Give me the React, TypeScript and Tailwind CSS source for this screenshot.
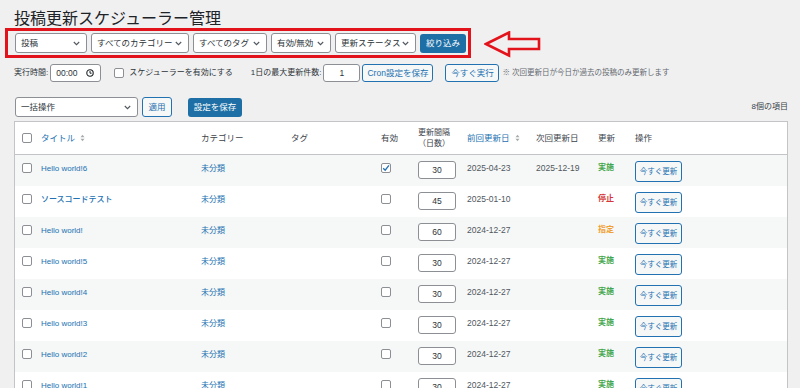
import { ReactNode } from "react";

type Row = {
  title: string;
  enabled: boolean;
  interval: number;
  last: string;
  next: string;
  status: "実施" | "停止" | "指定";
};

const rows: Row[] = [
  { title: "Hello world!6", enabled: true, interval: 30, last: "2025-04-23", next: "2025-12-19", status: "実施" },
  { title: "ソースコードテスト", enabled: false, interval: 45, last: "2025-01-10", next: "", status: "停止" },
  { title: "Hello world!", enabled: false, interval: 60, last: "2024-12-27", next: "", status: "指定" },
  { title: "Hello world!5", enabled: false, interval: 30, last: "2024-12-27", next: "", status: "実施" },
  { title: "Hello world!4", enabled: false, interval: 30, last: "2024-12-27", next: "", status: "実施" },
  { title: "Hello world!3", enabled: false, interval: 30, last: "2024-12-27", next: "", status: "実施" },
  { title: "Hello world!2", enabled: false, interval: 30, last: "2024-12-27", next: "", status: "実施" },
  { title: "Hello world!1", enabled: false, interval: 30, last: "2024-12-27", next: "", status: "実施" },
];

const statusColor = {
  実施: "text-[#3fa64a]",
  停止: "text-[#d63638]",
  指定: "text-[#f0a030]",
};

const cols =
  "grid grid-cols-[19px_160px_90px_90px_37px_49px_69px_62px_37px_1fr]";

function Chevron() {
  return (
    <svg width="7" height="5" viewBox="0 0 7 5" className="shrink-0">
      <path d="M0.8 1 L3.5 3.7 L6.2 1" fill="none" stroke="#50575e" strokeWidth="1.1" />
    </svg>
  );
}

function Select({ label, width }: { label: string; width: string }) {
  return (
    <div
      className={`${width} h-[20px] flex items-center justify-between bg-white border border-[#8c8f94] rounded-[3px] pl-[5px] pr-[6px] text-[8.5px] text-[#2c3338]`}>
      <span className="whitespace-nowrap">{label}</span>
      <Chevron />
    </div>
  );
}

function Checkbox({ checked = false }: { checked?: boolean }) {
  return (
    <div className="w-[10px] h-[10px] bg-white border border-[#8c8f94] rounded-[2px] flex items-center justify-center shrink-0">
      {checked && (
        <svg width="8" height="8" viewBox="0 0 8 8">
          <path d="M1.2 4.2 L3.2 6.2 L6.9 1.4" fill="none" stroke="#2271b1" strokeWidth="1.3" />
        </svg>
      )}
    </div>
  );
}

function SecondaryButton({ children, className }: { children: ReactNode; className: string }) {
  return (
    <div
      className={`${className} flex items-center justify-center border border-[#2271b1] text-[#2271b1] bg-[#f6f7f7] rounded-[3px] whitespace-nowrap`}>
      {children}
    </div>
  );
}

function SortIcon() {
  return (
    <svg width="5" height="8" viewBox="0 0 5 8" className="ml-[5px]">
      <path d="M0.5 3.2 L2.5 0.8 L4.5 3.2 Z" fill="#a7aaad" />
      <path d="M0.5 4.8 L2.5 7.2 L4.5 4.8 Z" fill="#a7aaad" />
    </svg>
  );
}

export default function App() {
  return (
    <div className="min-h-screen bg-[#f0f0f1] text-[8px] text-[#3c434a] font-['Liberation_Sans','Noto_Sans_CJK_JP',sans-serif] overflow-hidden">
      <div className="pl-[14px] pr-[12px]">
        <h1 className="pt-[9px] text-[16px] leading-[19px] text-[#1d2327] font-normal">
          投稿更新スケジューラー管理
        </h1>

        {/* filter row */}
        <div className="flex items-center -ml-[9px]">
          <div className="flex items-center gap-[4px] h-[30px] border-[3px] border-[#e3131b] pl-[7px] pr-[2px]">
            <Select label="投稿" width="w-[72px]" />
            <Select label="すべてのカテゴリー" width="w-[98px]" />
            <Select label="すべてのタグ" width="w-[74px]" />
            <Select label="有効/無効" width="w-[60px]" />
            <Select label="更新ステータス" width="w-[81px]" />
            <div className="w-[46px] h-[19px] flex items-center justify-center bg-[#1d6fa5] text-white rounded-[3px] text-[8.5px]">
              絞り込み
            </div>
          </div>
          <svg width="58" height="27" viewBox="0 0 58 27" className="ml-[13px] mt-[2px]">
            <polygon
              points="2,13 25,1.5 25,8 55,8 55,18 25,18 25,24.5"
              fill="none"
              stroke="#e3131b"
              strokeWidth="2.6"
              strokeLinejoin="miter"
            />
          </svg>
        </div>

        {/* settings row */}
        <div className="flex items-center h-[18px] mt-[6px] text-[8px] text-[#2c3338] whitespace-nowrap">
          <span>実行時間:</span>
          <div className="ml-[2px] w-[51px] h-[18px] bg-white border border-[#8c8f94] rounded-[3px] flex items-center justify-between pl-[5px] pr-[6px] text-[8.5px]">
            <span>00:00</span>
            <svg width="8" height="8" viewBox="0 0 8 8">
              <circle cx="4" cy="4" r="3.2" fill="none" stroke="#1d2327" strokeWidth="1.1" />
              <path d="M4 2 L4 4.2 L5.6 4.2" fill="none" stroke="#1d2327" strokeWidth="1" />
            </svg>
          </div>
          <div className="ml-[13px]">
            <Checkbox />
          </div>
          <span className="ml-[5px]">スケジューラーを有効にする</span>
          <span className="ml-[18px]">1日の最大更新件数:</span>
          <div className="ml-[2px] w-[37px] h-[18px] bg-white border border-[#8c8f94] rounded-[3px] flex items-center justify-center text-[8.5px]">
            1
          </div>
          <SecondaryButton className="ml-[2px] w-[71px] h-[18px] text-[8.5px]">Cron設定を保存</SecondaryButton>
          <SecondaryButton className="ml-[12px] w-[54px] h-[18px] text-[8.5px]">今すぐ実行</SecondaryButton>
          <span className="ml-[3px] text-[7.5px] text-[#646970]">※ 次回更新日が今日か過去の投稿のみ更新します</span>
        </div>

        {/* bulk row */}
        <div className="flex items-center h-[20px] mt-[15px] text-[8.5px] text-[#2c3338]">
          <div className="ml-[1px]">
            <Select label="一括操作" width="w-[123px]" />
          </div>
          <SecondaryButton className="ml-[4px] w-[30px] h-[20px]">適用</SecondaryButton>
          <div className="ml-[16px] w-[54px] h-[19px] flex items-center justify-center bg-[#1d6fa5] text-white rounded-[3px]">
            設定を保存
          </div>
          <span className="ml-auto text-[8px] text-[#3c434a]">8個の項目</span>
        </div>

        {/* table */}
        <div className="mt-[4px] bg-white border border-[#c3c4c7]">
          <div className={`${cols} items-center h-[33px] pl-[7px] border-b border-[#c3c4c7] text-[8.5px] text-[#3c434a]`}>
            <Checkbox />
            <div className="flex items-center text-[#2271b1]">
              タイトル
              <SortIcon />
            </div>
            <div>カテゴリー</div>
            <div>タグ</div>
            <div>有効</div>
            <div className="w-[32px] text-center leading-[11px] text-[8px]">
              <div>更新間隔</div>
              <div>（日数）</div>
            </div>
            <div className="flex items-center text-[#2271b1]">
              前回更新日
              <SortIcon />
            </div>
            <div>次回更新日</div>
            <div>更新</div>
            <div>操作</div>
          </div>

          {rows.map((r, i) => (
            <div
              key={r.title}
              className={`${cols} items-start h-[31px] pl-[7px] pt-[6px] ${i % 2 === 0 ? "bg-[#f6f7f7]" : "bg-white"}`}>
              <div className="mt-[2px]">
                <Checkbox />
              </div>
              <div className="mt-[2px] leading-[12px] font-medium text-[#2271b1] whitespace-nowrap">
                {r.title}
              </div>
              <div className="mt-[2px] leading-[12px] text-[#2271b1]">未分類</div>
              <div></div>
              <div className="mt-[2px]">
                <Checkbox checked={r.enabled} />
              </div>
              <div className="w-[38px] h-[18px] bg-white border border-[#8c8f94] rounded-[3px] flex items-center justify-center text-[8.5px] text-[#2c3338]">
                {r.interval}
              </div>
              <div className="mt-[1px] leading-[12px] text-[8.5px] text-[#50575e]">{r.last}</div>
              <div className="mt-[1px] leading-[12px] text-[8.5px] text-[#50575e]">{r.next}</div>
              <div className={`mt-[1px] leading-[12px] font-bold ${statusColor[r.status]}`}>{r.status}</div>
              <SecondaryButton className="w-[47px] h-[21px] text-[7.5px]">今すぐ更新</SecondaryButton>
            </div>
          ))}
        </div>
      </div>
    </div>
  );
}
